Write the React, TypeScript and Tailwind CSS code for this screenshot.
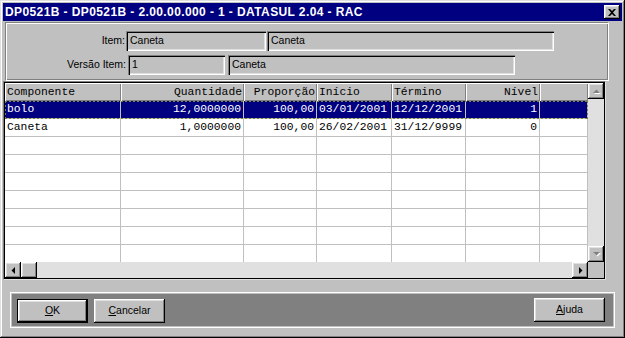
import React from 'react';

const sans = "font-['Liberation_Sans',Arial,sans-serif]";
const mono = "font-['Liberation_Mono','Courier_New',monospace]";
const raised =
  'bg-[#c0c0c0] shadow-[inset_-1px_-1px_0_#000,inset_1px_1px_0_#fff,inset_-2px_-2px_0_#808080,inset_2px_2px_0_#dfdfdf]';
const sunken =
  'bg-[#c0c0c0] shadow-[inset_1px_1px_0_#808080,inset_2px_2px_0_#000,inset_-1px_-1px_0_#fff,inset_-2px_-2px_0_#dfdfdf]';

function Field({ className, text }: { className: string; text: string }) {
  return (
    <div className={`${className} h-[20px] ${sunken} flex items-center pl-[4px] text-[10.5px] text-black ${sans}`}>
      {text}
    </div>
  );
}

function Arrow({ dir, disabled }: { dir: 'up' | 'down' | 'left' | 'right'; disabled?: boolean }) {
  const pts: Record<string, string> = {
    up: '4,5 7.5,1.5 11,5',
    down: '4,1 11,1 7.5,4.5',
    left: '5,1 5,8 1.5,4.5',
    right: '2,1 2,8 5.5,4.5',
  };
  const vertical = dir === 'up' || dir === 'down';
  return (
    <div className={`w-[16px] h-[16px] ${raised} flex items-center justify-center shrink-0`}>
      <svg width={vertical ? 15 : 7} height={vertical ? 6 : 9} viewBox={vertical ? '0 0 15 6' : '0 0 7 9'}>
        {disabled && (
          <polygon points={pts[dir]} fill="#fff" transform="translate(1,1)" />
        )}
        <polygon points={pts[dir]} fill={disabled ? '#808080' : '#000'} />
      </svg>
    </div>
  );
}

const headers = [
  { w: 'w-[116px]', label: 'Componente', right: false },
  { w: 'w-[123px]', label: 'Quantidade', right: true },
  { w: 'w-[73px]', label: 'Proporção', right: true },
  { w: 'w-[75px]', label: 'Início', right: false },
  { w: 'w-[74px]', label: 'Término', right: false },
  { w: 'w-[74px]', label: 'Nível', right: true },
  { w: 'w-[48px]', label: '', right: false },
];

const rows = [
  ['bolo', '12,0000000', '100,00', '03/01/2001', '12/12/2001', '1', ''],
  ['Caneta', '1,0000000', '100,00', '26/02/2001', '31/12/9999', '0', ''],
  ['', '', '', '', '', '', ''],
  ['', '', '', '', '', '', ''],
  ['', '', '', '', '', '', ''],
  ['', '', '', '', '', '', ''],
  ['', '', '', '', '', '', ''],
  ['', '', '', '', '', '', ''],
  ['', '', '', '', '', '', ''],
];

function Button({ label, u, isDefault, extra }: { label: string; u: string; isDefault?: boolean; extra?: string }) {
  const rest = label.slice(u.length);
  const inner = (
    <div className={`w-full h-full ${raised} flex items-center justify-center text-[10.5px] text-black ${sans}`}>
      <span>
        <span className="underline underline-offset-[1px]">{u}</span>
        {rest}
      </span>
    </div>
  );
  if (isDefault) {
    return <div className={`w-[71px] h-[24px] border border-black shrink-0 ${extra ?? ''}`}>{inner}</div>;
  }
  return <div className={`w-[71px] h-[24px] shrink-0 ${extra ?? ''}`}>{inner}</div>;
}

export default function App() {
  return (
    <div
      className={`w-[625px] h-[338px] p-[3px] bg-[#c0c0c0] flex flex-col shadow-[inset_-1px_-1px_0_#000,inset_1px_1px_0_#dfdfdf,inset_-2px_-2px_0_#808080,inset_2px_2px_0_#fff] ${sans}`}
    >
      {/* Title bar */}
      <div className="h-[18px] bg-[#000080] flex items-center justify-between pl-[2px] pr-[2px] shrink-0">
        <span className="text-white font-bold text-[12px] leading-none tracking-[0.4px]">
          DP0521B - DP0521B - 2.00.00.000 - 1 - DATASUL 2.04 - RAC
        </span>
        <div className={`w-[16px] h-[14px] ${raised} flex items-center justify-center`}>
          <svg width="8" height="7" viewBox="0 0 8 7">
            <path d="M0 0h2l2 2 2-2h2L5 3.5 8 7H6L4 5 2 7H0l3-3.5z" fill="#000" />
          </svg>
        </div>
      </div>

      {/* Item panel */}
      <div className="mt-[1px] ml-[2px] w-[604px] h-[59px] shrink-0 border border-t-[#808080] border-l-[#808080] border-r-white border-b-white shadow-[inset_1px_1px_0_#fff,inset_-1px_-1px_0_#808080] pt-[8px] flex flex-col gap-[4px]">
        <div className="flex items-center">
          <div className="w-[119px] text-right text-[10.5px] text-black">Item:</div>
          <Field className="ml-[1px] w-[140px]" text="Caneta" />
          <Field className="ml-[1px] w-[287px]" text="Caneta" />
        </div>
        <div className="flex items-center">
          <div className="w-[120px] text-right text-[10.5px] text-black">Versão Item:</div>
          <Field className="ml-[2px] w-[97px]" text="1" />
          <Field className="ml-[3px] w-[287px]" text="Caneta" />
        </div>
      </div>

      {/* Grid */}
      <div className="w-[603px] h-[199px] shrink-0 border border-t-[#808080] border-l-[#808080] border-r-[#dfdfdf] border-b-[#dfdfdf]">
        <div className={`w-full h-full border border-black bg-white flex flex-col ${mono}`}>
          <div className="flex h-[179px]">
            <div className="w-[583px] flex flex-col overflow-hidden">
              <div className="flex h-[18px] shrink-0">
                {headers.map((h, i) => (
                  <div
                    key={i}
                    className={`${h.w} h-[18px] shrink-0 bg-[#c0c0c0] shadow-[inset_1px_1px_0_#fff,inset_-1px_-1px_0_#808080] flex items-center px-[2px] text-[11.33px] text-black ${h.right ? 'justify-end' : 'justify-start'}`}
                  >
                    {h.label}
                  </div>
                ))}
              </div>
              {rows.map((r, ri) => {
                const sel = ri === 0;
                return (
                  <div key={ri} className={`relative flex h-[18px] shrink-0 ${sel ? 'bg-[#000080] text-white' : 'bg-white text-black'}`}>
                    {r.map((c, ci) => (
                      <div
                        key={ci}
                        className={`${headers[ci].w} h-[18px] shrink-0 border-r border-b border-[#c0c0c0] flex items-center px-[2px] text-[11.33px] whitespace-pre ${headers[ci].right ? 'justify-end' : 'justify-start'}`}
                      >
                        {c}
                      </div>
                    ))}
                    {sel && (
                      <>
                        <div className="absolute left-0 right-0 top-0 h-px bg-[repeating-linear-gradient(90deg,#808040_0_2px,transparent_2px_4px)]" />
                        <div className="absolute left-0 right-0 bottom-0 h-px bg-[repeating-linear-gradient(90deg,#808040_0_2px,transparent_2px_4px)]" />
                        <div className="absolute left-0 top-0 bottom-0 w-px bg-[repeating-linear-gradient(180deg,#808040_0_2px,transparent_2px_4px)]" />
                        <div className="absolute right-0 top-0 bottom-0 w-px bg-[repeating-linear-gradient(180deg,#808040_0_2px,transparent_2px_4px)]" />
                      </>
                    )}
                  </div>
                );
              })}
            </div>
            <div className="w-[16px] h-[179px] flex flex-col bg-[#e0e0e0]">
              <Arrow dir="up" disabled />
              <div className="flex-1" />
              <Arrow dir="down" disabled />
            </div>
          </div>
          <div className="flex h-[16px]">
            <div className="w-[583px] h-[16px] flex bg-[#e0e0e0]">
              <Arrow dir="left" />
              <div className={`w-[16px] h-[16px] ${raised}`} />
              <div className="flex-1" />
              <Arrow dir="right" />
            </div>
            <div className="w-[16px] h-[16px] bg-[#c0c0c0]" />
          </div>
        </div>
      </div>

      {/* Button panel */}
      <div className="mt-[12px] ml-[7px] w-[605px] h-[36px] shrink-0 border border-white p-[1px] bg-[#c0c0c0]">
        <div className="w-full h-full bg-[#808080] flex items-start pt-[5px] pl-[5px] pr-[8px]">
          <Button label="OK" u="O" isDefault />
          <Button label="Cancelar" u="C" extra="ml-[6px]" />
          <div className="flex-1" />
          <Button label="Ajuda" u="A" extra="-mt-px" />
        </div>
      </div>
    </div>
  );
}
